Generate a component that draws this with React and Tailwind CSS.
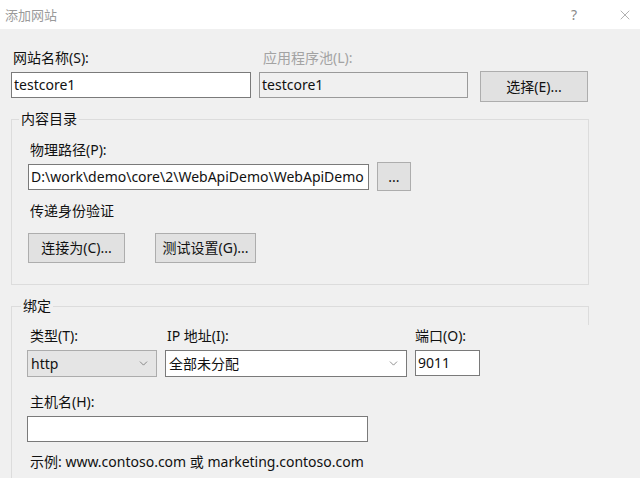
import { ChevronDown, X } from "lucide-react";

const font = { fontFamily: '"Noto Sans", "Noto Sans CJK SC", sans-serif' };

function Btn({ children, className = "" }) {
  return (
    <button
      className={`flex items-center justify-center bg-[#e1e1e1] border border-[#adadad] text-[14px] text-[#111] ${className}`}
    >
      {children}
    </button>
  );
}

function Input({ value, className = "" }) {
  return (
    <div
      className={`flex items-center h-[26px] bg-white border border-[#7a7a7a] pl-[2px] text-[14px] text-[#111] overflow-hidden whitespace-nowrap ${className}`}
    >
      {value}
    </div>
  );
}

function Select({ value, className = "", gray }) {
  return (
    <div
      className={`flex items-center justify-between h-[27px] border pl-[3px] pr-[6px] text-[14px] text-[#111] ${
        gray ? "bg-[#e5e5e5] border-[#acacac]" : "bg-white border-[#7a7a7a]"
      } ${className}`}
    >
      <span>{value}</span>
      <ChevronDown size={13} strokeWidth={1.2} className="text-[#555]" />
    </div>
  );
}

export default function App() {
  return (
    <div className="w-[640px] h-[478px] overflow-hidden bg-[#f0f0f0] leading-4" style={font}>
      <div className="h-[29px] bg-white flex items-center justify-between pl-[5px] pr-[7px]">
        <span className="text-[13px] text-[#9a9a9a]">添加网站</span>
        <div className="flex items-center gap-[40px] text-[#8a8a8a]">
          <span className="text-[14px]">?</span>
          <X size={16} strokeWidth={1} />
        </div>
      </div>

      <div className="pl-[11px] pt-[21px]">
        <div className="flex items-start">
          <div className="w-[240px]">
            <div className="pl-[2px] text-[14px] text-[#111]">网站名称(S):</div>
            <Input value="testcore1" className="mt-[6px] w-[240px]" />
          </div>
          <div className="ml-[8px] w-[209px]">
            <div className="pl-[4px] text-[14px] text-[#a3a3a3]">应用程序池(L):</div>
            <Input value="testcore1" className="mt-[6px] w-[209px] !bg-[#f0f0f0] !border-[#9a9a9a]" />
          </div>
          <Btn className="ml-[12px] mt-[21px] w-[108px] h-[31px]">选择(E)...</Btn>
        </div>

        <fieldset className="mt-[9px] w-[578px] border border-[#dcdcdc] pb-[21px]">
          <legend className="ml-[7px] px-[2px] text-[14px] text-[#111]">内容目录</legend>
          <div className="pl-[16px]">
            <div className="mt-[15px] pl-[2px] text-[14px] text-[#111]">物理路径(P):</div>
            <div className="mt-[4px] flex items-center">
              <Input value="D:\work\demo\core\2\WebApiDemo\WebApiDemo" className="w-[341px]" />
              <Btn className="ml-[8px] w-[34px] h-[29px] text-[11px]">...</Btn>
            </div>
            <div className="mt-[12px] pl-[2px] text-[14px] text-[#111]">传递身份验证</div>
            <div className="mt-[14px] flex">
              <Btn className="w-[97px] h-[30px]">连接为(C)...</Btn>
              <Btn className="ml-[30px] w-[101px] h-[30px]">测试设置(G)...</Btn>
            </div>
          </div>
        </fieldset>

        <div className="relative mt-[13px] w-[578px]">
          <div className="absolute right-0 top-[8px] h-[19px] w-px bg-[#dcdcdc]" />
          <fieldset className="border-t border-l border-[#dcdcdc] pb-[20px]">
            <legend className="ml-[9px] px-[2px] text-[14px] text-[#111]">绑定</legend>
            <div className="pl-[15px]">
              <div className="mt-[14px] flex items-start">
                <div className="w-[130px]">
                  <div className="pl-[3px] text-[14px] text-[#111]">类型(T):</div>
                  <Select value="http" gray className="mt-[6px] w-[130px]" />
                </div>
                <div className="ml-[8px] w-[242px]">
                  <div className="pl-[2px] text-[14px] text-[#111]">IP 地址(I):</div>
                  <Select value="全部未分配" className="mt-[6px] w-[242px]" />
                </div>
                <div className="ml-[8px] w-[65px]">
                  <div className="text-[14px] text-[#111]">端口(O):</div>
                  <Input value="9011" className="mt-[6px] w-[65px]" />
                </div>
              </div>
              <div className="mt-[17px] pl-[3px] text-[14px] text-[#111]">主机名(H):</div>
              <Input value="" className="mt-[6px] w-[341px]" />
              <div className="mt-[12px] pl-[3px] text-[14px] text-[#111]">
                示例: www.contoso.com 或 marketing.contoso.com
              </div>
            </div>
          </fieldset>
        </div>
      </div>
    </div>
  );
}
